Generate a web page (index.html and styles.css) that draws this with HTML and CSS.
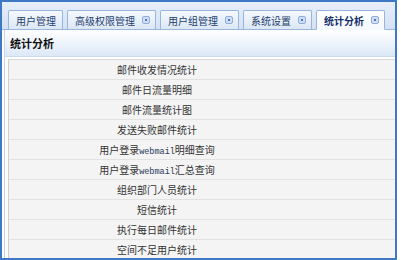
FILE: index.html
```html
<!DOCTYPE html>
<html lang="zh-CN">
<head>
    <meta charset="UTF-8">
    <title>统计分析</title>
    <link rel="stylesheet" href="styles.css">
</head>
<body>
    <div class="frame">
        <!-- Barra de pestañas -->
        <div class="tabbar">
            <div class="tab"><span>用户管理</span></div>
            <div class="tab"><span>高级权限管理</span><i class="close"><svg viewBox="0 0 8 8"><path d="M2.5 2.5L5.5 5.5M5.5 2.5L2.5 5.5"/></svg></i></div>
            <div class="tab"><span>用户组管理</span><i class="close"><svg viewBox="0 0 8 8"><path d="M2.5 2.5L5.5 5.5M5.5 2.5L2.5 5.5"/></svg></i></div>
            <div class="tab"><span>系统设置</span><i class="close"><svg viewBox="0 0 8 8"><path d="M2.5 2.5L5.5 5.5M5.5 2.5L2.5 5.5"/></svg></i></div>
            <div class="tab active"><span>统计分析</span><i class="close"><svg viewBox="0 0 8 8"><path d="M2.5 2.5L5.5 5.5M5.5 2.5L2.5 5.5"/></svg></i></div>
        </div>

        <!-- Contenido -->
        <div class="content">
            <div class="panel">
                <div class="title">统计分析</div>
                <div class="list">
                    <div class="row"><div class="cell">邮件收发情况统计</div></div>
                    <div class="row"><div class="cell">邮件日流量明细</div></div>
                    <div class="row"><div class="cell">邮件流量统计图</div></div>
                    <div class="row"><div class="cell">发送失败邮件统计</div></div>
                    <div class="row"><div class="cell">用户登录<span class="mono">webmail</span>明细查询</div></div>
                    <div class="row"><div class="cell">用户登录<span class="mono">webmail</span>汇总查询</div></div>
                    <div class="row"><div class="cell">组织部门人员统计</div></div>
                    <div class="row"><div class="cell">短信统计</div></div>
                    <div class="row"><div class="cell">执行每日邮件统计</div></div>
                    <div class="row"><div class="cell">空间不足用户统计</div></div>
                </div>
            </div>
        </div>
    </div>
</body>
</html>
```

FILE: styles.css
```css
/* Estilo básico */
body {
    margin: 0;
    background-color: #fff;
    font-family: "Liberation Sans", "Noto Sans CJK SC", sans-serif;
    font-size: 10px;
    color: #333;
}
/* Marco principal */
.frame {
    width: 397px;
    height: 260px;
    box-sizing: border-box;
    border: 2px solid #3f78c3;
    display: flex;
    flex-direction: column;
    overflow: hidden;
}
/* Barra de pestañas */
.tabbar {
    height: 28px;
    box-sizing: border-box;
    padding-left: 6px;
    display: flex;
    align-items: flex-end;
    gap: 4px;
    background: linear-gradient(#e6eef9, #d5e2f3);
    border-bottom: 1px solid #99b6dc;
    flex-shrink: 0;
}
.tab {
    height: 20px;
    box-sizing: border-box;
    margin-bottom: -1px;
    padding: 0 5px 0 7px;
    display: flex;
    flex-shrink: 0;
    align-items: center;
    gap: 7px;
    white-space: nowrap;
    border: 1px solid #97b5de;
    border-bottom-color: #99b6dc;
    border-radius: 2px 2px 0 0;
    background: linear-gradient(#f5f9fe, #dce7f5);
    color: #24406c;
}
.tab:first-child {
    padding-right: 6px;
}
.tab.active {
    background: linear-gradient(#ffffff, #f5f9fe);
    border-bottom-color: #f5f9fe;
    font-weight: bold;
    color: #15306a;
}
/* Icono para cerrar */
.close {
    width: 8px;
    height: 8px;
    box-sizing: border-box;
    border: 1px solid #8eaddb;
    border-radius: 2px;
    background-color: #d2e0f4;
    display: flex;
    flex-shrink: 0;
}
.close svg {
    width: 6px;
    height: 6px;
}
.close path {
    stroke: #3564a8;
    stroke-width: 1.1;
    fill: none;
}
/* Contenido */
.content {
    flex: 1;
    padding-left: 2px;
    display: flex;
}
.panel {
    flex: 1;
    border-left: 1px solid #c6d5ea;
    padding-left: 3px;
    display: flex;
    flex-direction: column;
}
/* Título */
.title {
    height: 27px;
    box-sizing: border-box;
    margin-left: -3px;
    padding-left: 5px;
    display: flex;
    align-items: center;
    font-size: 11px;
    font-weight: bold;
    color: #111;
    background: linear-gradient(#ffffff, #dce8f7);
    border-bottom: 1px solid #cddbee;
}
/* Lista de estadísticas */
.list {
    margin-top: 2px;
    border-top: 1px solid #d8d8d8;
    border-left: 1px solid #d0d0d0;
}
.row {
    height: 20px;
    box-sizing: border-box;
    display: flex;
    align-items: center;
    background-color: #f4f4f4;
    border-bottom: 1px solid #e2e2e2;
}
.cell {
    width: 296px;
    text-align: center;
    white-space: nowrap;
}
.mono {
    font-family: "Liberation Mono", monospace;
    font-size: 8.5px;
    color: #2a3a5a;
}
```
